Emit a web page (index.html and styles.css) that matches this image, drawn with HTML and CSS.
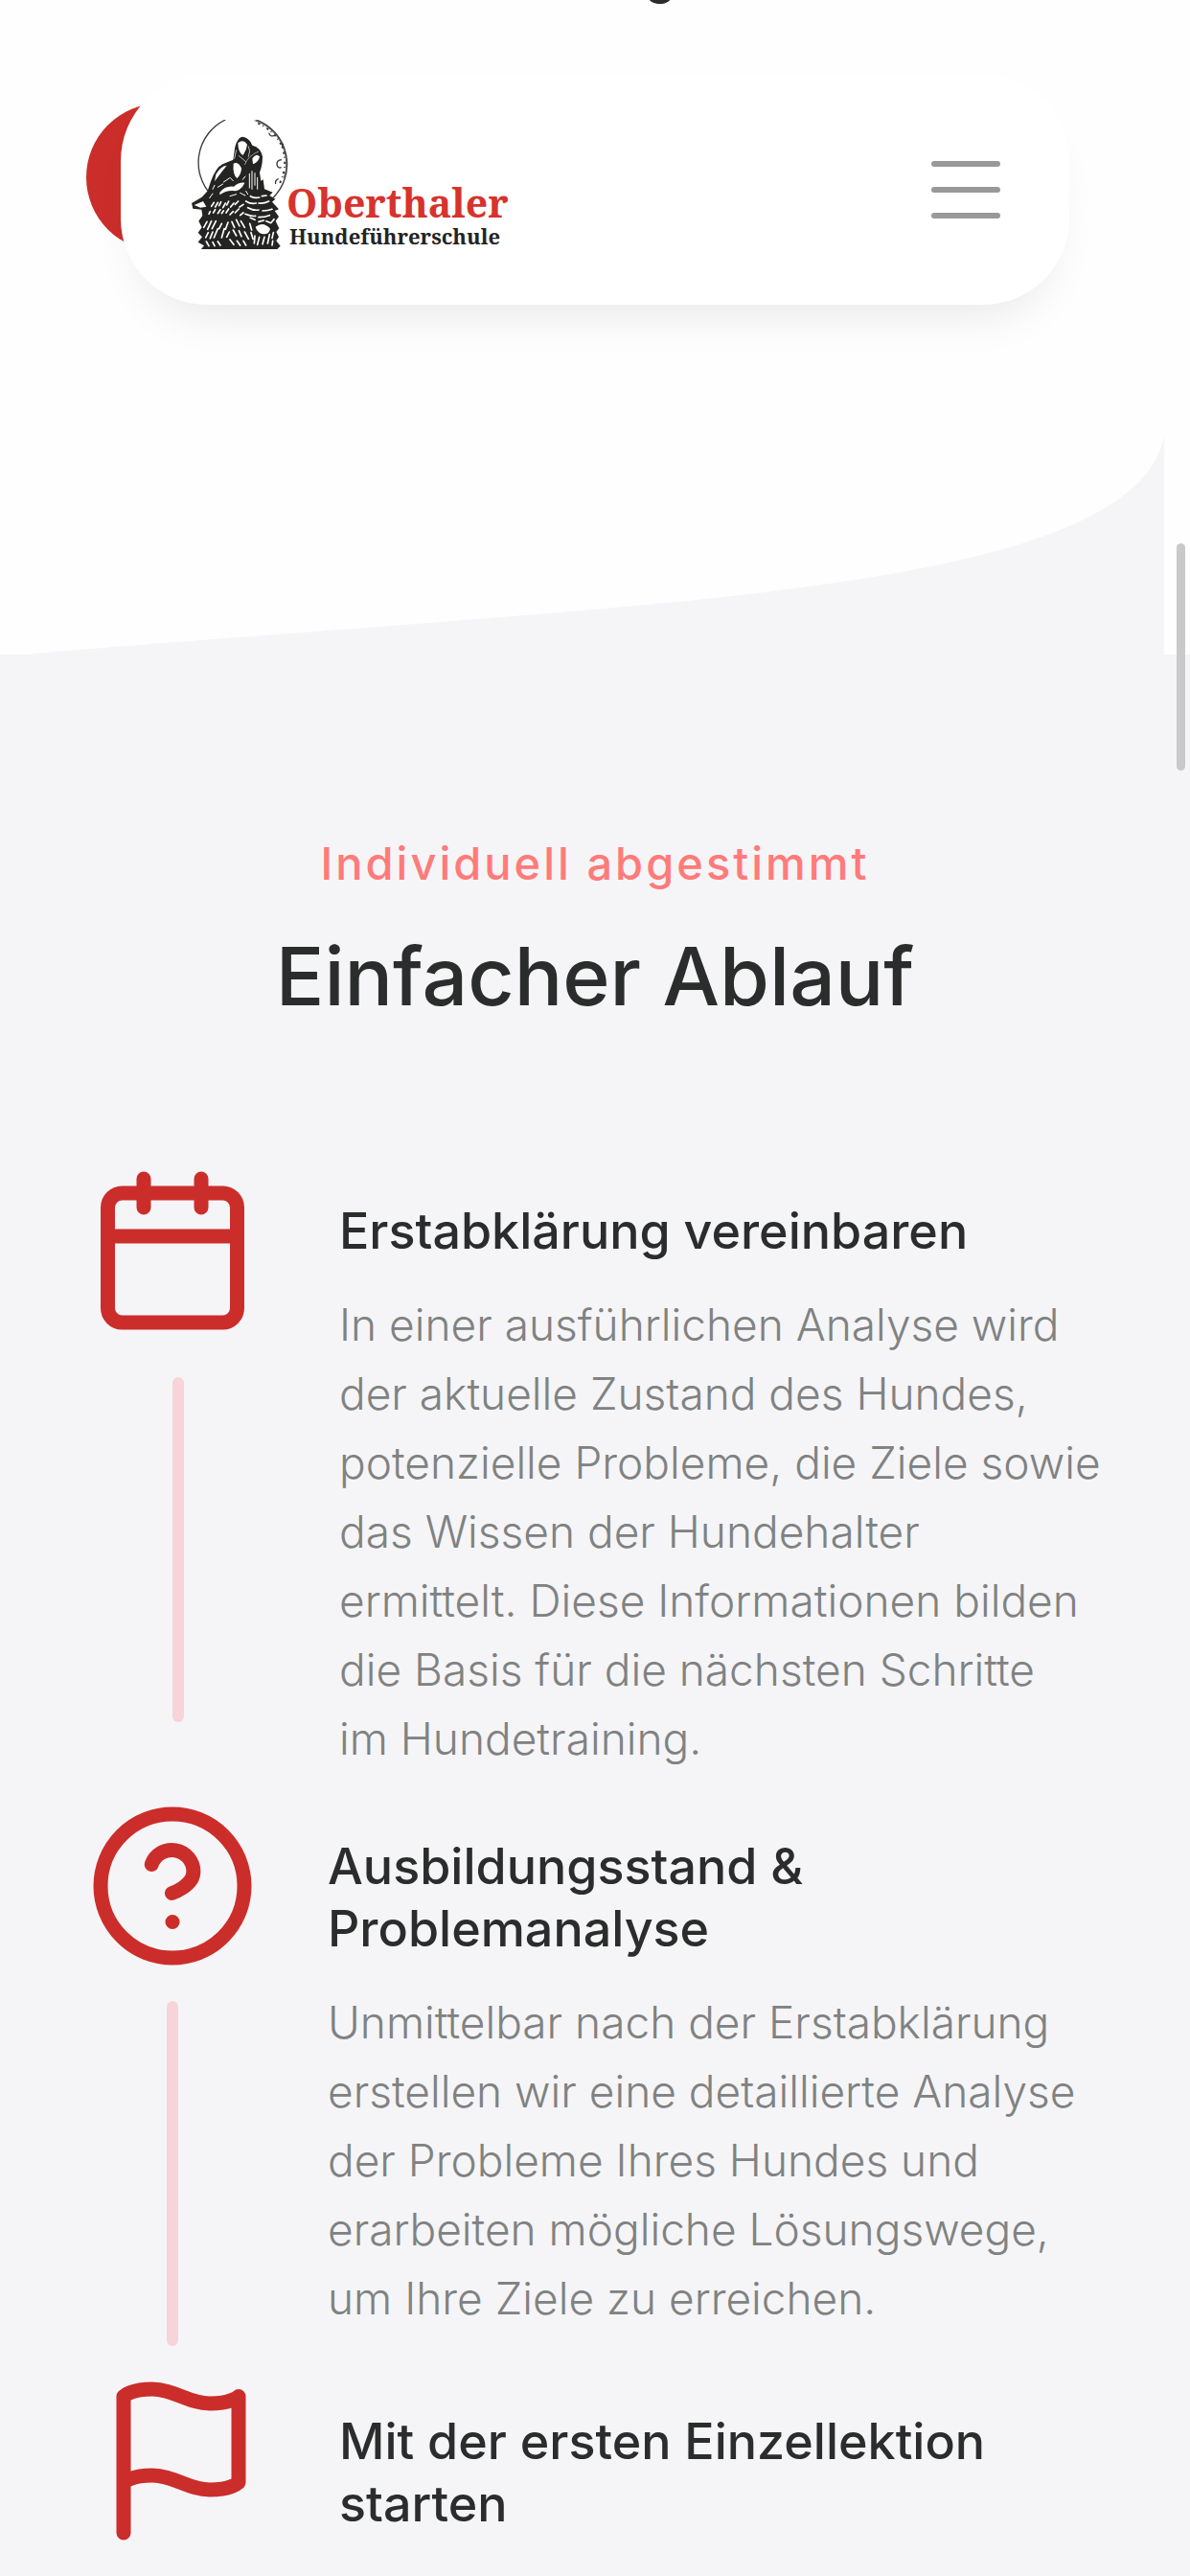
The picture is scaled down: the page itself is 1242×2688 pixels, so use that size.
FILE: index.html
```html
<!DOCTYPE html>
<html lang="de">
<head>
<meta charset="utf-8">
<meta name="viewport" content="width=device-width, initial-scale=1">
<title>Oberthaler Hundeführerschule</title>
<link rel="stylesheet" href="styles.css">
</head>
<body>
<div class="intro">
  <p class="intro-text">g</p>
  <header class="header">
    <span class="header-dot"></span>
    <div class="header-card">
      <a class="logo" href="#" aria-label="Oberthaler Hundeführerschule">
        <svg class="logo-wolf" viewBox="30 45 315 405" aria-hidden="true">
          <g fill="none" stroke="#3a3a39">
            <path d="M104 292A148 148 0 0 1 136 45" stroke-width="4"/>
            <path d="M232 45A148 148 0 0 1 284 290" stroke-width="4"/>
            <path d="M226 47A142 142 0 0 1 318 230" stroke-width="2"/>
            <path d="M238 56Q300 85 317 140Q330 195 306 244" stroke-width="6" stroke-dasharray="7 9 3 12"/>
            <path d="M272 86q4 14 16 8M312 170q-16 2-15 14q2 14 14 10M302 230q-12 4-9 16M318 120q-8 6-2 14" stroke-width="4"/>
          </g>
          <path fill="#242423" d="M166 130Q174 98 190 98Q212 103 220 125Q247 132 252 160Q252 188 243 210L247 236L254 232L258 262L284 272L274 282L292 293L282 302L303 325L290 330L303 348L293 362L304 385L295 396L303 412L295 424L308 440L298 450L60 450L69 439L50 428L63 412L50 398L62 382L52 362L64 345L61 326L34 323L30 306L62 287L80 268L90 238Q106 194 127 184L160 170Z"/>
          <g fill="#fff">
            <path d="M175 118Q190 104 204 122Q202 142 190 156Q176 148 175 118Z"/>
            <path d="M161 182Q174 174 186 196Q186 216 172 228Q158 216 161 182Z"/>
            <path d="M220 166Q232 148 243 160Q240 178 222 184Z"/>
            <path d="M106 216Q120 190 140 188Q122 210 102 238Z"/>
            <path d="M118 272Q136 250 162 254Q178 240 196 242Q188 262 168 268Q140 264 118 280Z"/>
            <path d="M38 312L66 300L76 317L58 320Z"/>
            <path d="M230 380Q254 362 276 386Q272 406 250 402Q234 396 230 380Z"/>
          </g>
          <g fill="none" stroke="#fff" stroke-linecap="round">
            <path d="M211 214V258M219 206V262M228 212V250M236 226V262" stroke-width="3"/>
            <path d="M208 128Q216 142 208 160M170 140L164 166M178 158L200 176" stroke-width="2"/>
            <path d="M130 240l18-12M112 256l16-10M182 274l16 8M150 284l20-6M86 290l10-14M150 226l10 10M190 232l8-10M96 262l6-12M200 268l6 10" stroke-width="3"/>
            <path d="M92 316l8-12M104 318l8-14M116 314l6-12M128 320l8-14M140 312l6-12M152 318l10-12M166 310l10-10M98 336l6-10M112 338l8-12M124 338l6-8M138 336l8-12M150 342l10-10M166 336l12-12M180 318l12-8M84 340l4-8M182 344l10-8" stroke-width="5"/>
            <path d="M200 300q16 10 32 6M240 306q16 2 32-6M206 320q18 10 34 7M252 330q18 0 30-5M198 340q18 8 32 6M240 350q20 0 34-6M214 284q14 8 28 4M250 284l14-2" stroke-width="5"/>
            <path d="M78 364l-10 18M92 362l-12 26M106 362l-12 24M82 398l-8 16M96 396l-8 20M112 386l-12 28M124 370l-8 16M132 386l-8 28M144 366l-8 22M148 396l-8 16M76 426l8 14M96 428l6 12M112 426l8 12M156 364l8 18M170 358l10 20M184 362l12 20M160 390l10 18M178 392l8 18M150 420l12 16M172 424l10 14M196 396l12 22M192 424l8 14M212 370l6 20M216 398l6 20M228 408l-2 24M242 412l-6 24M258 412l-6 22M274 404l-6 28M286 398l-4 18M288 356l-8 10M284 424l-2 14M214 352l14 6M240 364l16-4M264 362l14 6" stroke-width="5"/>
          </g>
          <path d="M196 186Q206 158 240 144" fill="none" stroke="#999" stroke-width="3"/>
        </svg>
        <span class="logo-words">
          <span class="logo-name">Oberthaler</span>
          <span class="logo-sub">Hundeführerschule</span>
        </span>
      </a>
      <button class="menu" type="button" aria-label="Menü"><span></span><span></span><span></span></button>
    </div>
  </header>
  <svg class="wave" viewBox="0 455 1215 228" preserveAspectRatio="none" aria-hidden="true">
    <path fill="#f5f5f8" d="M28 683C200 667 480 650 717 627C950 603 1195 565 1215 455V683Z"/>
  </svg>
</div>

<main class="process">
  <p class="eyebrow">Individuell abgestimmt</p>
  <h1 class="title">Einfacher Ablauf</h1>

  <section class="step step-wide">
    <div class="rail">
      <svg class="icon" viewBox="0 0 24 24" aria-hidden="true"><rect x="3" y="4" width="18" height="18" rx="2"/><path d="M16 2v4M8 2v4M3 10h18"/></svg>
      <span class="line"></span>
    </div>
    <div class="step-text">
      <h2>Erstabklärung vereinbaren</h2>
      <p>In einer ausführlichen Analyse wird<br>der aktuelle Zustand des Hundes,<br>potenzielle Probleme, die Ziele sowie<br>das Wissen der Hundehalter<br>ermittelt. Diese Informationen bilden<br>die Basis für die nächsten Schritte<br>im Hundetraining.</p>
    </div>
  </section>

  <section class="step">
    <div class="rail">
      <svg class="icon" viewBox="0 0 24 24" aria-hidden="true"><circle cx="12" cy="12" r="10"/><path d="M9.09 9a3 3 0 0 1 5.83 1c0 2-3 3-3 3M12 17h.01"/></svg>
      <span class="line"></span>
    </div>
    <div class="step-text">
      <h2>Ausbildungsstand &amp;<br>Problemanalyse</h2>
      <p>Unmittelbar nach der Erstabklärung<br>erstellen wir eine detaillierte Analyse<br>der Probleme Ihres Hundes und<br>erarbeiten mögliche Lösungswege,<br>um Ihre Ziele zu erreichen.</p>
    </div>
  </section>

  <section class="step step-wide step-last">
    <div class="rail">
      <svg class="icon" viewBox="0 0 24 24" aria-hidden="true"><path d="M4 15s1-1 4-1 5 2 8 2 4-1 4-1V3s-1 1-4 1-5-2-8-2-4 1-4 1zM4 22v-7"/></svg>
    </div>
    <div class="step-text">
      <h2>Mit der ersten Einzellektion<br>starten</h2>
    </div>
  </section>
</main>
<span class="scroll-thumb"></span>
</body>
</html>
```
FILE: styles.css
```css
* { box-sizing: border-box; }

body {
  margin: 0;
  background: #f5f5f8;
  color: #2b2d2c;
  font-family: Inter, "Liberation Sans", sans-serif;
}

h1, h2, p { margin: 0; }

/* Top area with the floating header */
.intro {
  display: flow-root;
  overflow: hidden;
  background: #fefefe;
}

.intro-text {
  height: 78px;
  margin-top: -58px;
  margin-bottom: 58px;
  padding-left: 136px;
  font-size: 52px;
  font-weight: 500;
  line-height: 65px;
  text-align: center;
}

.header {
  position: relative;
  margin: 0 126px;
}

.header-dot {
  position: absolute;
  top: 30px;
  left: -36px;
  width: 154px;
  height: 154px;
  border-radius: 50%;
  background: #cb2e2a;
}

.header-card {
  position: relative;
  display: flex;
  align-items: center;
  justify-content: space-between;
  height: 240px;
  padding: 0 72px 0 74px;
  border-radius: 90px;
  background: #fff;
  box-shadow: 0 30px 48px -20px rgba(0, 0, 0, 0.09);
}

.logo {
  display: flex;
  align-items: flex-end;
  padding-bottom: 12px;
  text-decoration: none;
}

.logo-wolf {
  width: 105px;
  height: 135px;
}

.logo-words {
  display: flex;
  flex-direction: column;
  margin-left: -6px;
  font-family: "Noto Serif", "DejaVu Serif", serif;
  font-weight: 700;
  white-space: nowrap;
}

.logo-name {
  color: #d7322d;
  font-size: 41px;
  line-height: 42px;
}

.logo-sub {
  padding-left: 3px;
  color: #242423;
  font-size: 22px;
  line-height: 28px;
}

.menu {
  display: flex;
  flex-direction: column;
  gap: 21px;
  width: 72px;
  padding: 0;
  border: 0;
  background: none;
}

.menu span {
  height: 6px;
  border-radius: 3px;
  background: #999;
}

.wave {
  display: block;
  width: calc(100% - 27px);
  height: 228px;
  margin-top: 137px;
}

/* Process steps */
.process {
  padding: 186px 90px 30px;
}

.eyebrow {
  color: #ff7b7a;
  font-size: 47px;
  font-weight: 500;
  letter-spacing: 3px;
  line-height: 64px;
  text-align: center;
}

.title {
  margin: 36px 0 146px;
  font-size: 84px;
  font-weight: 500;
  line-height: 100px;
  text-align: center;
}

.step {
  display: flex;
  gap: 72px;
}

.rail {
  flex: none;
  display: flex;
  flex-direction: column;
  align-items: center;
  gap: 30px;
  width: 180px;
  padding-bottom: 30px;
}

.step-wide .rail {
  gap: 42px;
  width: 192px;
}

.step-wide .icon { align-self: flex-start; }

.step-last .rail {
  padding: 0 0 0 9px;
}

.icon {
  width: 180px;
  height: 180px;
  fill: none;
  stroke: #cb2e2a;
  stroke-width: 2;
  stroke-linecap: round;
  stroke-linejoin: round;
}

.line {
  width: 12px;
  height: 360px;
  border-radius: 6px;
  background: #f6d4d9;
}

.step-text {
  flex: 1;
  padding: 37px 0 28px;
  white-space: nowrap;
}

.step-last .step-text { padding-bottom: 0; }

.step h2 {
  font-size: 52px;
  font-weight: 500;
  line-height: 65px;
}

.step p {
  margin-top: 29px;
  color: #808281;
  font-size: 46px;
  font-weight: 300;
  line-height: 72px;
}

.scroll-thumb {
  position: fixed;
  top: 567px;
  right: 5px;
  width: 9px;
  height: 237px;
  border-radius: 5px;
  background: #c9c9ca;
}
```
